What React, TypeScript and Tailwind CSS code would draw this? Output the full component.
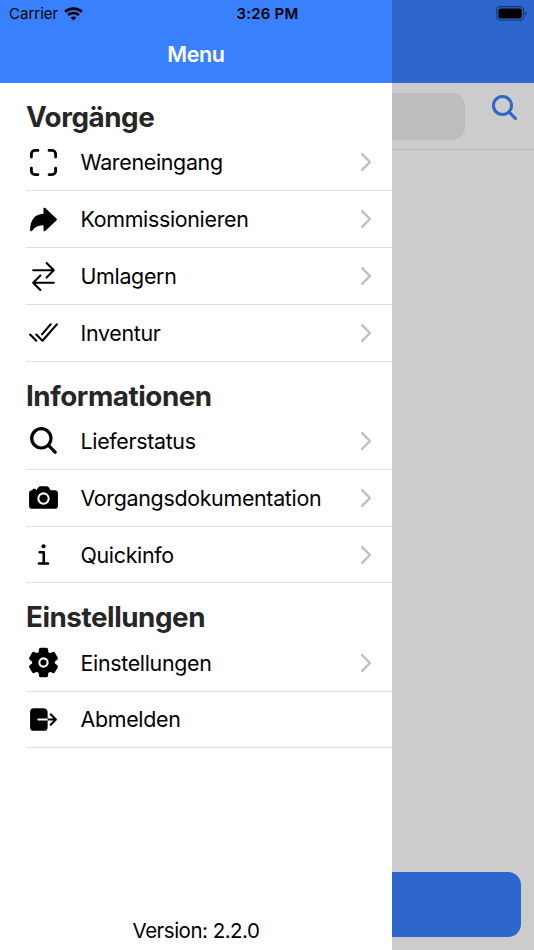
import { IconType } from "react-icons"
import {
    IoArrowRedo,
    IoCamera,
    IoCheckmarkDoneOutline,
    IoInformation,
    IoLogOut,
    IoScan,
    IoSearch,
    IoSettings,
    IoSwapHorizontal
} from "react-icons/io5"

type MenuItem = {
    label: string,
    icon: IconType,
    chevron?: boolean
}

type MenuGroup = {
    title: string,
    items: MenuItem[]
}

const groups: MenuGroup[] = [
    {
        title: 'Vorgänge',
        items: [
            { label: 'Wareneingang', icon: IoScan, chevron: true },
            { label: 'Kommissionieren', icon: IoArrowRedo, chevron: true },
            { label: 'Umlagern', icon: IoSwapHorizontal, chevron: true },
            { label: 'Inventur', icon: IoCheckmarkDoneOutline, chevron: true }
        ]
    },
    {
        title: 'Informationen',
        items: [
            { label: 'Lieferstatus', icon: IoSearch, chevron: true },
            { label: 'Vorgangsdokumentation', icon: IoCamera, chevron: true },
            { label: 'Quickinfo', icon: IoInformation, chevron: true }
        ]
    },
    {
        title: 'Einstellungen',
        items: [
            { label: 'Einstellungen', icon: IoSettings, chevron: true },
            { label: 'Abmelden', icon: IoLogOut }
        ]
    }
]

function Chevron() {
    return (
        <svg className="w-3 h-[18px] shrink-0" viewBox="0 0 12 18" fill="none" stroke="#bfbfbf" strokeWidth="2.4">
            <path d="M2.2 1.2L9.9 9L2.2 16.8" strokeLinecap="round" strokeLinejoin="round" />
        </svg>
    )
}

function StatusBar() {
    return (
        <div className="absolute inset-x-0 top-0 h-7 px-2 flex items-center text-black">
            <div className="flex-1 flex items-center gap-x-1.5 pl-px">
                <span className="text-[15px]">Carrier</span>
                <svg className="w-[19px] h-[14px] mb-px" viewBox="0 0 20 15" fill="none" stroke="black" strokeWidth="2.9">
                    <path d="M1 5.2C6 .5 14 .5 19 5.2" />
                    <path d="M4.2 8.7C7.5 5.7 12.5 5.7 15.8 8.7" />
                    <path d="M10 14.5L6.9 11.3C8.6 9.8 11.4 9.8 13.1 11.3Z" fill="black" stroke="none" />
                </svg>
            </div>
            <span className="text-[15px] font-semibold tracking-[0.2px]">3:26 PM</span>
            <div className="flex-1 flex justify-end">
                <svg className="w-[31px] h-[15px] mr-[-1px] mb-[2px]" viewBox="0 0 31 15">
                    <rect x=".6" y=".6" width="27" height="13.6" rx="3.6" fill="none" stroke="black" strokeOpacity=".45" strokeWidth="1.1" />
                    <rect x="2.4" y="2.4" width="23.4" height="10" rx="2" />
                    <path d="M29.2 5V9.8C30.9 9 30.9 5.8 29.2 5Z" fillOpacity=".5" />
                </svg>
            </div>
        </div>
    )
}

function Row({ item }: { item: MenuItem }) {

    const Icon = item.icon;

    return (
        <li className="ml-[26px] h-[56.8px] pl-[0.8px] pr-5 flex items-center border-b border-[#dfdfdf]">
            <Icon className="size-[33px] shrink-0" />
            <span className="ml-[20.7px] flex-1 text-[21.4px] tracking-[-0.31px] whitespace-nowrap">{item.label}</span>
            {item.chevron && <Chevron />}
        </li>
    )
}

function App() {
    return (
        <div className="relative w-[534px] h-[950px] flex overflow-hidden bg-white text-black font-['Inter',sans-serif]">
            <aside className="w-[392px] h-full flex flex-col bg-white">
                <header className="h-[83px] pt-[26px] flex items-center justify-center bg-[#3880ff]">
                    <h1 className="text-[21.5px] font-semibold tracking-[-0.4px] text-white">Menu</h1>
                </header>
                <div className="pt-[0.3px]">
                    {groups.map(group => (
                        <section key={group.title}>
                            <h2 className="h-[51.3px] pl-[26px] pt-[17px] text-[27.8px] leading-[34px] font-bold tracking-[-0.45px] text-[#262626]">{group.title}</h2>
                            <ul>
                                {group.items.map(item => <Row key={item.label} item={item} />)}
                            </ul>
                        </section>
                    ))}
                </div>
                <p className="mt-auto pb-1 text-center text-[20.5px] leading-[30px] tracking-[-0.5px]">Version: 2.2.0</p>
            </aside>

            {/* Page behind the open menu, dimmed by the backdrop */}
            <main className="flex-1 h-full flex flex-col bg-[#cccccc]">
                <div className="h-[83px] bg-[#2d66cc]" />
                <div className="h-[67px] flex justify-between pt-[10px] pr-[14.5px] border-b border-[#b8b8b8]">
                    <div className="w-[73px] h-[47px] rounded-r-[13px] bg-[#bdbdbd]" />
                    <IoSearch className="mt-[-1px] size-[31px] text-[#2d66cc]" />
                </div>
                <div className="mt-auto mb-[13px] mr-[13px] h-[65px] rounded-r-[13px] bg-[#2d66cc]" />
            </main>

            <StatusBar />
        </div>
    )
}

export default App
